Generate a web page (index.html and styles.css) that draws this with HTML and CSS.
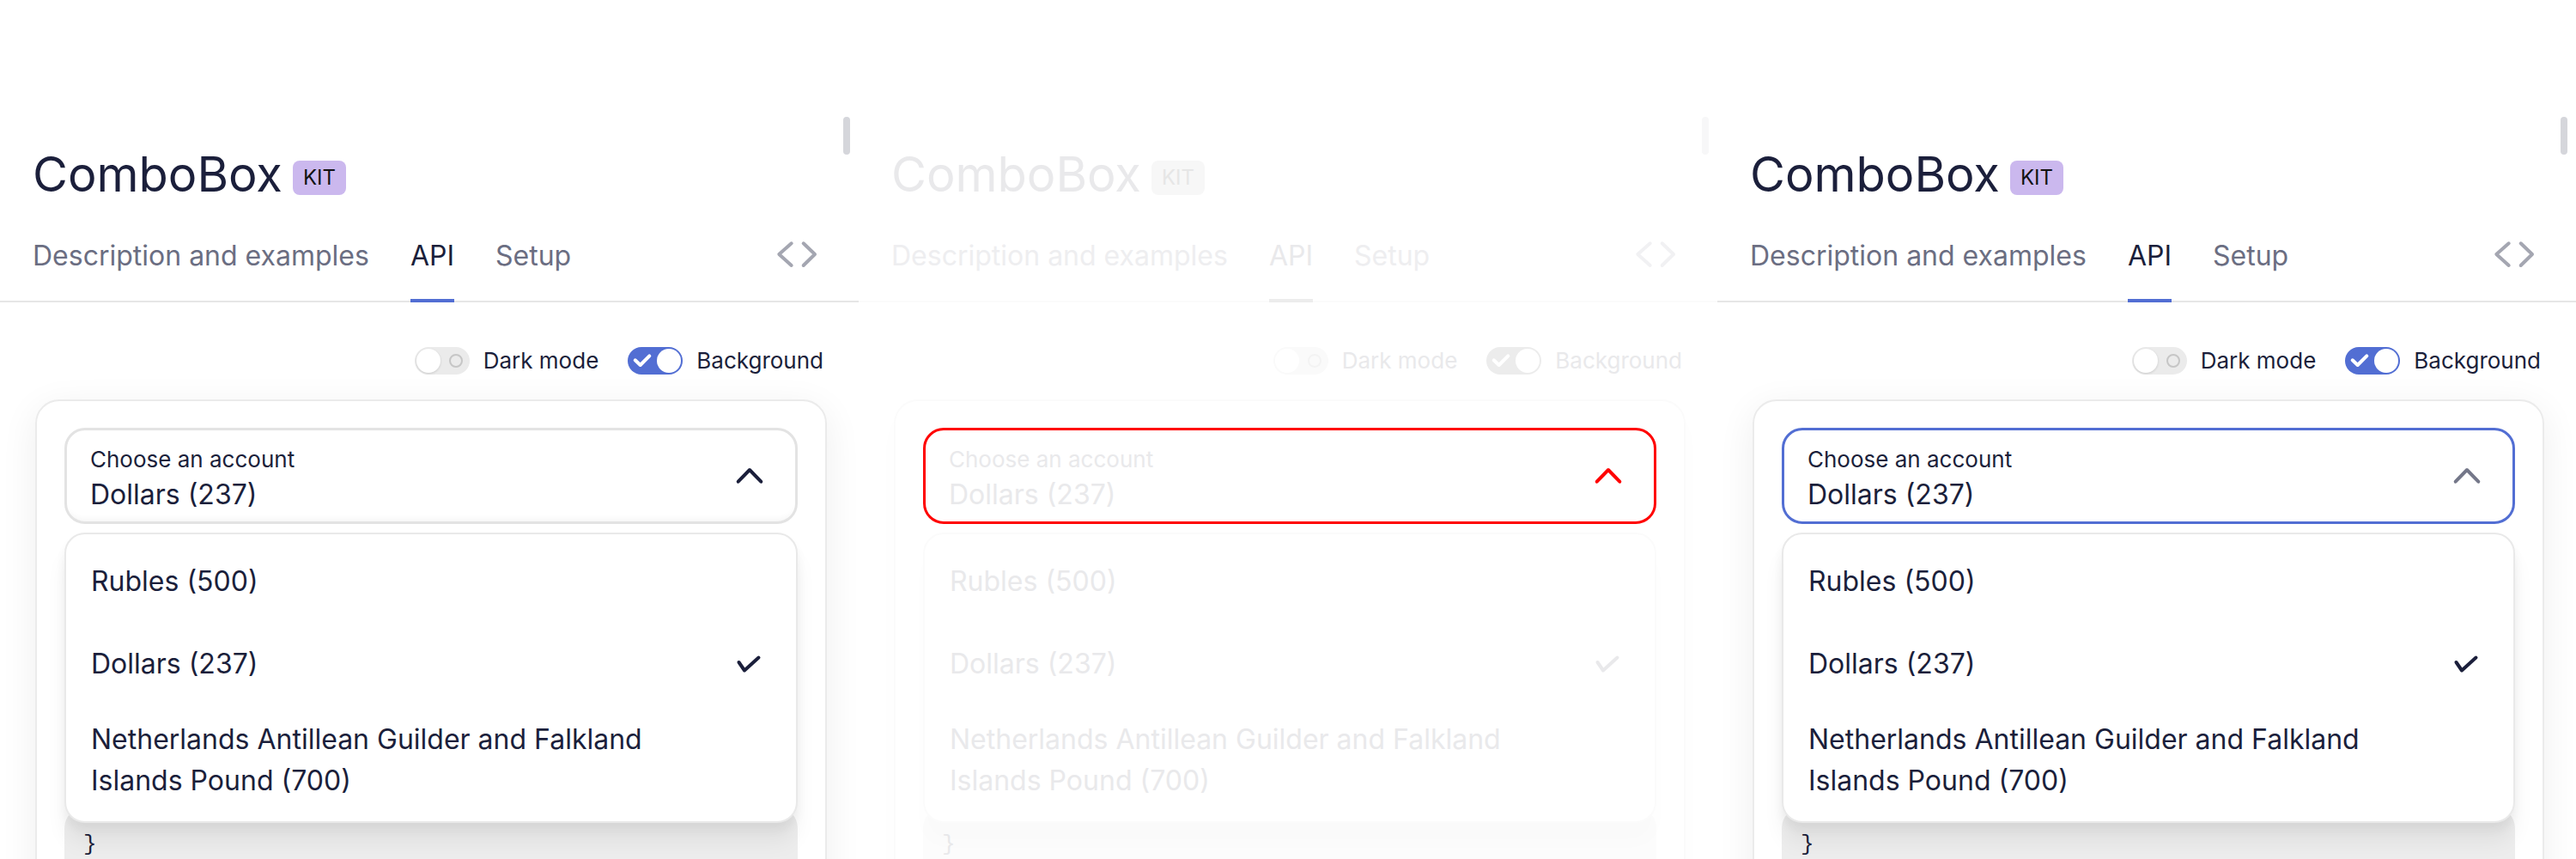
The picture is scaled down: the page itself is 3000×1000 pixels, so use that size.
FILE: index.html
```html
<!DOCTYPE html>
<html lang="en">
<head>
<meta charset="utf-8">
<title>ComboBox</title>
<link rel="stylesheet" href="styles.css">
</head>
<body>
<section class="panel">
  <div class="scroll-thumb"></div>
  <div class="title-row"><h1 class="title">ComboBox</h1><span class="badge">KIT</span></div>
  <nav class="tabs">
    <a class="tab">Description and examples</a>
    <a class="tab tab--active">API</a>
    <a class="tab">Setup</a>
    <svg class="code-icon" viewBox="0 0 44 28"><polyline points="15.7,1.3 1.3,14 15.7,27"/><polyline points="29.7,1.3 43,14 29.7,27"/></svg>
  </nav>
  <div class="demo">
    <div class="toggles">
      <div class="switch-item"><span class="switch"><span class="knob"></span><span class="ring"></span></span><span class="switch-label">Dark mode</span></div>
      <div class="switch-item"><span class="switch switch--on"><svg class="switch-check" viewBox="0 0 20 16"><polyline points="1.7,7.3 7.7,13 18.3,2.3"/></svg><span class="knob"></span></span><span class="switch-label">Background</span></div>
    </div>
    <div class="card">
      <div class="combo">
        <div class="field">
          <div class="field-text"><span class="field-label">Choose an account</span><span class="field-value">Dollars (237)</span></div>
          <svg class="chevron" viewBox="0 0 28 16"><polyline points="0.7,14.7 14,1 27.3,14.7"/></svg>
        </div>
        <div class="dropdown">
          <div class="option"><span class="option-text">Rubles (500)</span></div>
          <div class="option"><span class="option-text">Dollars (237)</span><svg class="check" viewBox="0 0 26 18"><polyline points="1.5,7 8,16.5 24.5,1.5"/></svg></div>
          <div class="option"><span class="option-text">Netherlands Antillean Guilder and Falkland Islands Pound (700)</span></div>
        </div>
      </div>
      <pre class="code">}</pre>
    </div>
  </div>
</section>
<section class="panel panel--faded">
  <div class="scroll-thumb"></div>
  <div class="title-row"><h1 class="title">ComboBox</h1><span class="badge">KIT</span></div>
  <nav class="tabs">
    <a class="tab">Description and examples</a>
    <a class="tab tab--active">API</a>
    <a class="tab">Setup</a>
    <svg class="code-icon" viewBox="0 0 44 28"><polyline points="15.7,1.3 1.3,14 15.7,27"/><polyline points="29.7,1.3 43,14 29.7,27"/></svg>
  </nav>
  <div class="demo">
    <div class="toggles">
      <div class="switch-item"><span class="switch"><span class="knob"></span><span class="ring"></span></span><span class="switch-label">Dark mode</span></div>
      <div class="switch-item"><span class="switch switch--on"><svg class="switch-check" viewBox="0 0 20 16"><polyline points="1.7,7.3 7.7,13 18.3,2.3"/></svg><span class="knob"></span></span><span class="switch-label">Background</span></div>
    </div>
    <div class="card">
      <div class="combo">
        <div class="field">
          <div class="field-text"><span class="field-label">Choose an account</span><span class="field-value">Dollars (237)</span></div>
          <svg class="chevron" viewBox="0 0 28 16"><polyline points="0.7,14.7 14,1 27.3,14.7"/></svg>
        </div>
        <div class="dropdown">
          <div class="option"><span class="option-text">Rubles (500)</span></div>
          <div class="option"><span class="option-text">Dollars (237)</span><svg class="check" viewBox="0 0 26 18"><polyline points="1.5,7 8,16.5 24.5,1.5"/></svg></div>
          <div class="option"><span class="option-text">Netherlands Antillean Guilder and Falkland Islands Pound (700)</span></div>
        </div>
      </div>
      <pre class="code">}</pre>
    </div>
  </div>
</section>
<section class="panel panel--focused">
  <div class="scroll-thumb"></div>
  <div class="title-row"><h1 class="title">ComboBox</h1><span class="badge">KIT</span></div>
  <nav class="tabs">
    <a class="tab">Description and examples</a>
    <a class="tab tab--active">API</a>
    <a class="tab">Setup</a>
    <svg class="code-icon" viewBox="0 0 44 28"><polyline points="15.7,1.3 1.3,14 15.7,27"/><polyline points="29.7,1.3 43,14 29.7,27"/></svg>
  </nav>
  <div class="demo">
    <div class="toggles">
      <div class="switch-item"><span class="switch"><span class="knob"></span><span class="ring"></span></span><span class="switch-label">Dark mode</span></div>
      <div class="switch-item"><span class="switch switch--on"><svg class="switch-check" viewBox="0 0 20 16"><polyline points="1.7,7.3 7.7,13 18.3,2.3"/></svg><span class="knob"></span></span><span class="switch-label">Background</span></div>
    </div>
    <div class="card">
      <div class="combo">
        <div class="field">
          <div class="field-text"><span class="field-label">Choose an account</span><span class="field-value">Dollars (237)</span></div>
          <svg class="chevron" viewBox="0 0 28 16"><polyline points="0.7,14.7 14,1 27.3,14.7"/></svg>
        </div>
        <div class="dropdown">
          <div class="option"><span class="option-text">Rubles (500)</span></div>
          <div class="option"><span class="option-text">Dollars (237)</span><svg class="check" viewBox="0 0 26 18"><polyline points="1.5,7 8,16.5 24.5,1.5"/></svg></div>
          <div class="option"><span class="option-text">Netherlands Antillean Guilder and Falkland Islands Pound (700)</span></div>
        </div>
      </div>
      <pre class="code">}</pre>
    </div>
  </div>
</section>
</body>
</html>
```
FILE: styles.css
```css
* { box-sizing: border-box; }
html, body { margin: 0; padding: 0; }
body {
  display: flex;
  width: 3000px;
  height: 1000px;
  overflow: hidden;
  background: #ffffff;
  font-family: Inter, "Noto Sans", sans-serif;
}

.panel {
  --text: #1b1f3b;
  --text2: #6b6e82;
  --text3: #a4a6b1;
  --primary: #526ed3;
  --line: #e6e6e6;
  --badge: #cbb8ee;
  --badge-text: #121212;
  --toggle-off: #ebebeb;
  --ring: #c6c6c6;
  --knob-shadow: 0 1px 3px rgba(0, 0, 0, 0.14);
  --card-border: #ebebeb;
  --card-shadow: 0 10px 44px rgba(0, 0, 0, 0.07);
  --field-border: #e3e3e3;
  --field-shadow: inset 0 -10px 10px -10px rgba(0, 0, 0, 0.07);
  --chevron: #1b1f3b;
  --drop-border: #e9e9e9;
  --drop-shadow: 0 24px 24px rgba(0, 0, 0, 0.05), 0 8px 12px rgba(0, 0, 0, 0.05);
  --code-bg: #ededed;
  --scroll: #d5d6db;
  position: relative;
  flex: 0 0 1000px;
  height: 1000px;
  overflow: hidden;
  padding-top: 171px;
  color: var(--text);
}

.panel--faded {
  --text: #e9e9eb;
  --text2: #eeeef0;
  --text3: #f1f1f3;
  --primary: #ececec;
  --line: #fbfbfb;
  --badge: #f7f7f7;
  --badge-text: #e6e6e6;
  --toggle-off: #fafafa;
  --ring: #f3f3f3;
  --knob-shadow: none;
  --card-border: #fbfbfb;
  --card-shadow: 0 10px 44px rgba(0, 0, 0, 0.01);
  --field-border: #ff0000;
  --field-shadow: none;
  --chevron: #ff0000;
  --drop-border: #fbfbfb;
  --drop-shadow: 0 24px 24px rgba(0, 0, 0, 0.01);
  --code-bg: #fcfcfc;
  --scroll: #f7f7f8;
}

.panel--focused {
  --field-border: #526ed3;
  --field-shadow: none;
  --chevron: #747789;
}

.scroll-thumb {
  position: absolute;
  left: 982px;
  top: 136px;
  width: 8px;
  height: 44px;
  border-radius: 4px;
  background: var(--scroll);
}

.title-row {
  display: flex;
  align-items: center;
  gap: 12px;
  padding: 0 38px;
}
.title {
  margin: 0;
  font-size: 56px;
  line-height: 64px;
  font-weight: 400;
  color: var(--text);
}
.badge {
  margin-top: 7px;
  height: 40px;
  padding: 0 12px;
  border-radius: 8px;
  background: var(--badge);
  color: var(--badge-text);
  font-size: 24px;
  line-height: 40px;
}

.tabs {
  display: flex;
  align-items: flex-start;
  gap: 48px;
  padding: 41px 50px 0 38px;
  box-shadow: inset 0 -2px 0 var(--line);
}
.tab {
  font-size: 32px;
  line-height: 44px;
  padding-bottom: 32px;
  color: var(--text2);
}
.tab--active {
  color: var(--text);
  box-shadow: inset 0 -4px 0 var(--primary);
}
.code-icon {
  margin-left: auto;
  margin-top: 6px;
  width: 44px;
  height: 28px;
  overflow: visible;
  fill: none;
  stroke: var(--text3);
  stroke-width: 4;
  stroke-linecap: round;
  stroke-linejoin: round;
}

.demo {
  padding: 52px 37px 0 41px;
}
.toggles {
  display: flex;
  justify-content: flex-end;
  gap: 34px;
  height: 32px;
  padding-right: 4px;
}
.switch-item {
  display: flex;
  align-items: center;
  gap: 16px;
}
.switch {
  display: flex;
  align-items: center;
  justify-content: space-between;
  width: 64px;
  height: 32px;
  padding: 2px;
  border-radius: 16px;
  background: var(--toggle-off);
}
.switch--on { background: var(--primary); }
.knob {
  width: 28px;
  height: 28px;
  border-radius: 50%;
  background: #ffffff;
  box-shadow: var(--knob-shadow);
}
.switch--on .knob { box-shadow: none; }
.ring {
  width: 16px;
  height: 16px;
  margin-right: 6px;
  border-radius: 50%;
  border: 2px solid var(--ring);
}
.switch-check {
  width: 20px;
  height: 16px;
  margin-left: 5px;
  overflow: visible;
  fill: none;
  stroke: #ffffff;
  stroke-width: 4;
  stroke-linecap: round;
  stroke-linejoin: round;
}
.switch-label {
  font-size: 26px;
  line-height: 32px;
  color: var(--text);
}

.card {
  margin-top: 29px;
  height: 700px;
  padding: 31px 32px 0;
  border: 2px solid var(--card-border);
  border-radius: 28px;
  background: #ffffff;
  box-shadow: var(--card-shadow);
}
.combo { position: relative; }
.field {
  display: flex;
  align-items: center;
  height: 112px;
  padding: 0 39px 0 27px;
  border: 3px solid var(--field-border);
  border-radius: 24px;
  background: #ffffff;
  box-shadow: var(--field-shadow);
}
.field-text {
  align-self: flex-start;
  margin-top: 18px;
  display: flex;
  flex-direction: column;
}
.field-label { font-size: 26px; line-height: 32px; }
.field-value { font-size: 32px; line-height: 44px; margin-top: 3px; }
.chevron {
  margin-left: auto;
  width: 28px;
  height: 16px;
  overflow: visible;
  fill: none;
  stroke: var(--chevron);
  stroke-width: 4;
  stroke-linecap: round;
  stroke-linejoin: round;
}

.dropdown {
  position: absolute;
  left: 0;
  right: 0;
  top: calc(100% + 10px);
  z-index: 2;
  padding: 7px 0;
  border: 2px solid var(--drop-border);
  border-radius: 24px;
  background: #ffffff;
  box-shadow: var(--drop-shadow);
}
.option {
  display: flex;
  align-items: center;
  min-height: 96px;
  padding: 16px 42px 16px 29px;
  font-size: 32px;
  line-height: 48px;
}
.option-text { max-width: 700px; }
.check {
  flex: none;
  margin-left: auto;
  width: 26px;
  height: 18px;
  overflow: visible;
  fill: none;
  stroke: var(--text);
  stroke-width: 4;
  stroke-linecap: round;
  stroke-linejoin: round;
}

.code {
  margin: 330px 0 0;
  padding: 24px 22px;
  border-radius: 24px;
  background: var(--code-bg);
  color: var(--text);
  font-family: "Liberation Mono", monospace;
  font-size: 26px;
  line-height: 38px;
  white-space: pre;
  overflow: hidden;
}
```
